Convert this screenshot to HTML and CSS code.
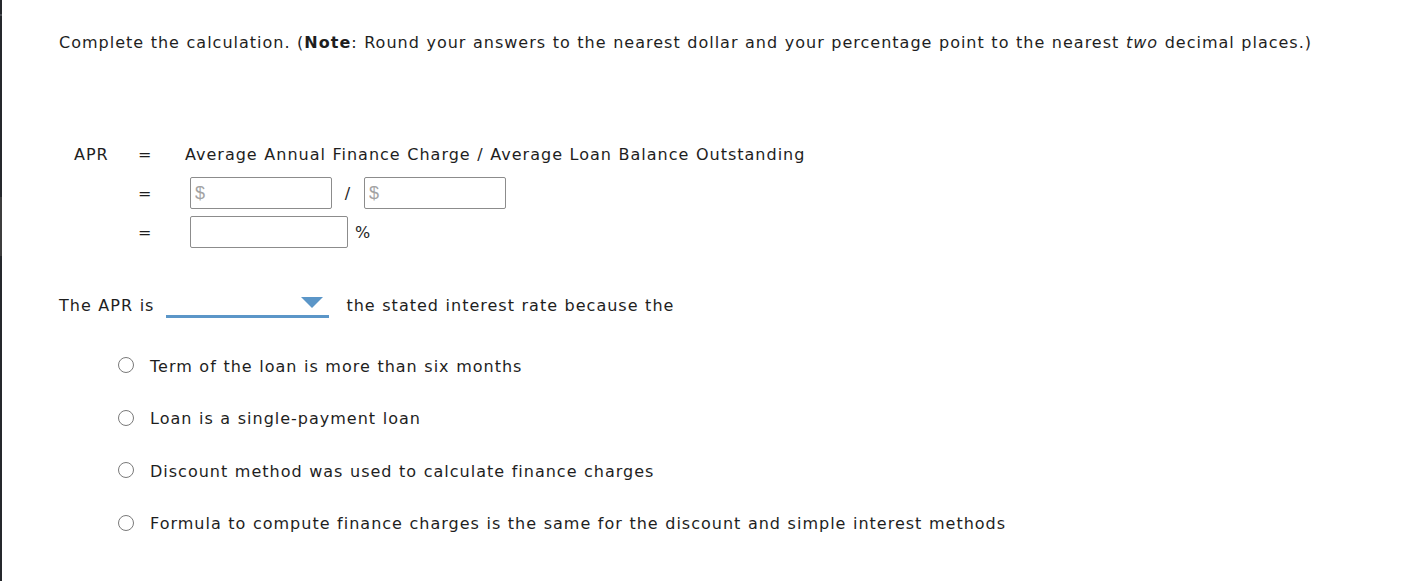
FILE: index.html
```html
<!DOCTYPE html>
<html>
<head>
<meta charset="utf-8">
<link rel="stylesheet" href="styles.css">
</head>
<body>
<div class="frame">
  <div class="edge"></div>
  <main class="content">
    <p class="instr">Complete the calculation. (<b>Note</b>: Round your answers to the nearest dollar and your percentage point to the nearest <i>two</i> decimal places.)</p>

    <div class="calc">
      <div class="lbl">APR</div>
      <div class="eq">=</div>
      <div class="expr">Average Annual Finance Charge / Average Loan Balance Outstanding</div>

      <div class="lbl"></div>
      <div class="eq">=</div>
      <div class="expr inputs">
        <input class="box money" type="text" placeholder="$">
        <span class="slash">/</span>
        <input class="box money" type="text" placeholder="$">
      </div>

      <div class="lbl"></div>
      <div class="eq">=</div>
      <div class="expr inputs">
        <input class="box pct" type="text">
        <span class="unit">%</span>
      </div>
    </div>

    <div class="sentence">
      <span>The APR is</span>
      <span class="select"><span class="caret"></span></span>
      <span>the stated interest rate because the</span>
    </div>

    <ul class="options">
      <li><span class="radio"></span><span>Term of the loan is more than six months</span></li>
      <li><span class="radio"></span><span>Loan is a single-payment loan</span></li>
      <li><span class="radio"></span><span>Discount method was used to calculate finance charges</span></li>
      <li><span class="radio"></span><span>Formula to compute finance charges is the same for the discount and simple interest methods</span></li>
    </ul>
  </main>
</div>
</body>
</html>
```

FILE: styles.css
```css
html, body {
  margin: 0;
  padding: 0;
  background: #ffffff;
}
body {
  font-family: "DejaVu Sans", Verdana, sans-serif;
  font-size: 16px;
  letter-spacing: 1px;
  word-spacing: 0.5px;
  color: #1e1e1e;
}
.frame {
  display: flex;
  min-height: 581px;
}
.edge {
  width: 2px;
  flex: 0 0 2px;
  background: linear-gradient(to bottom,
    #25282c 0px, #25282c 14px,
    #4a4d52 14px, #4a4d52 16px,
    #25282c 16px, #25282c 197px,
    #3e3e3e 197px, #3e3e3e 256px,
    #25282c 256px, #25282c 100%);
}
.content {
  flex: 1;
  padding: 33px 0 0 57px;
}
.instr {
  margin: 0;
  line-height: 20px;
  height: 20px;
  white-space: nowrap;
}
.calc {
  margin-top: 85px;
  margin-left: 15px;
  display: grid;
  grid-template-columns: 64px 47px auto;
  grid-auto-rows: 32px;
  row-gap: 7px;
  align-items: center;
}
.inputs {
  display: flex;
  align-items: center;
  padding-left: 5px;
}
.box {
  box-sizing: border-box;
  height: 32px;
  border: 1px solid #8c8c8c;
  border-radius: 2px;
  margin: 0;
  padding: 0 0 0 4px;
  font-family: "Liberation Sans", Arial, sans-serif;
  font-size: 18px;
  letter-spacing: 0;
  background: #fff;
  outline: none;
}
.box::placeholder {
  color: #a3a3a3;
}
.money {
  width: 142px;
}
.slash {
  width: 32px;
  text-align: center;
}
.pct {
  width: 158px;
}
.unit {
  margin-left: 7px;
}
.sentence {
  margin-top: 41px;
  height: 32px;
  display: flex;
  align-items: center;
}
.select {
  box-sizing: border-box;
  width: 163px;
  height: 32px;
  margin: 0 17px 0 12px;
  border-bottom: 3px solid #5b96c8;
  display: flex;
  justify-content: flex-end;
  align-items: flex-start;
  padding: 11px 6px 0 0;
  align-self: flex-start;
  position: relative;
  top: -3px;
}
.caret {
  width: 0;
  height: 0;
  border-left: 11px solid transparent;
  border-right: 11px solid transparent;
  border-top: 11px solid #5b96c8;
}
.options {
  list-style: none;
  margin: 35px 0 0 0;
  padding: 0 0 0 59px;
  display: flex;
  flex-direction: column;
  gap: 32.5px;
}
.options li {
  display: flex;
  align-items: center;
  height: 20px;
}
.radio {
  box-sizing: border-box;
  width: 16px;
  height: 16px;
  border: 1px solid #7a7a7a;
  border-radius: 50%;
  margin-right: 16px;
  position: relative;
  top: -1px;
}
```
